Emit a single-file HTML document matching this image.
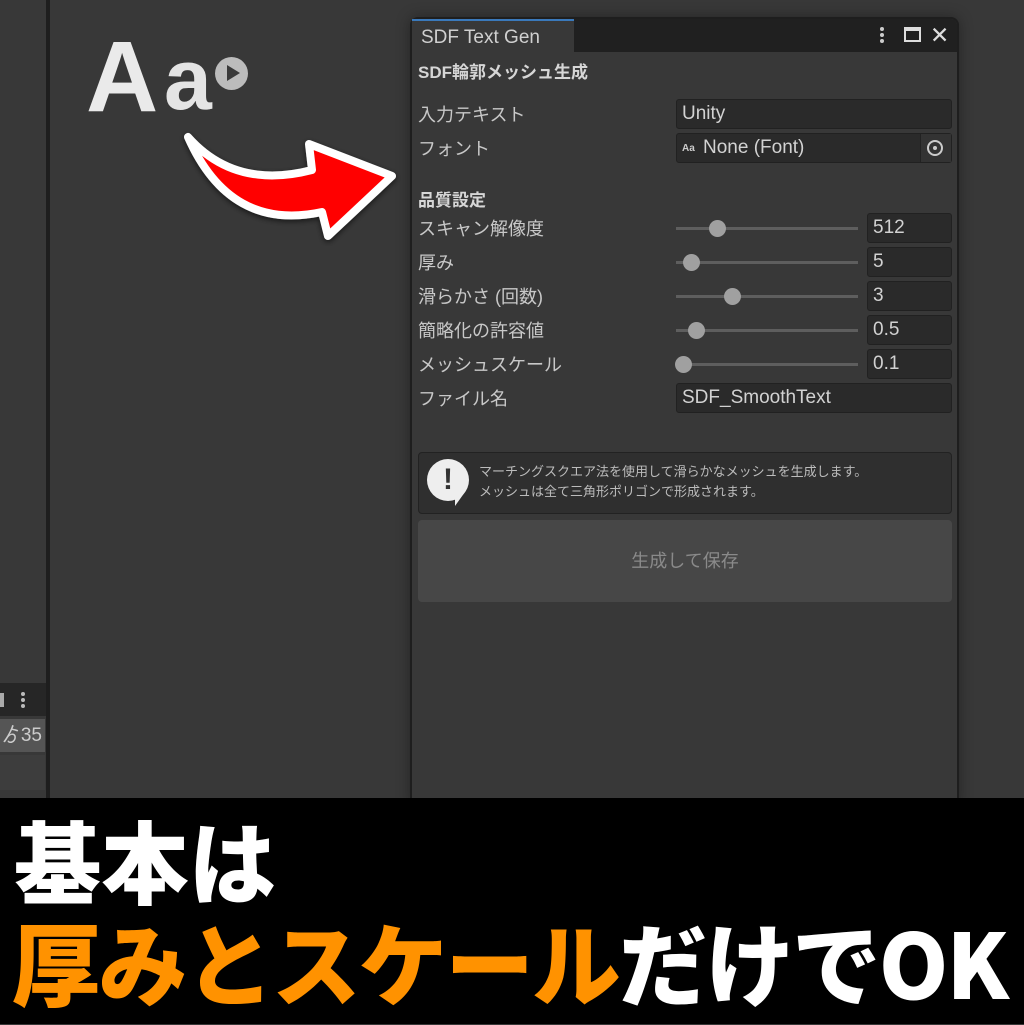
<!DOCTYPE html>
<html><head><meta charset="utf-8"><style>
*{margin:0;padding:0;box-sizing:border-box}
body{width:1024px;height:1024px;background:#383838;position:relative;overflow:hidden;font-family:"Liberation Sans","Noto Sans CJK JP",sans-serif;color:#c8c8c8}
.a{position:absolute}
.lbl{position:absolute;left:418px;font-size:18px;color:#c8c8c8;line-height:20px}
.fld{position:absolute;background:#2a2a2a;border:1px solid #212121;border-radius:3px;font-size:19px;color:#d2d2d2;padding-left:5px;line-height:28px;height:30px}
.trk{position:absolute;left:676px;width:182px;height:3px;background:#5e5e5e}
.knob{position:absolute;width:17px;height:17px;border-radius:50%;background:#a0a0a0}
</style></head><body>
<div class="a" style="left:0;top:0;width:46px;height:800px;background:#383838"></div>
<div class="a" style="left:46px;top:0;width:4px;height:800px;background:#1e1e1e"></div>
<div class="a" style="left:0;top:683px;width:46px;height:33px;background:#262626"></div>
<div class="a" style="left:21px;top:692px;width:4px;height:4px;border-radius:2px;background:#bbb;box-shadow:0 6px 0 #bbb,0 12px 0 #bbb"></div>
<div class="a" style="left:0;top:693px;width:4px;height:14px;background:#aaa"></div>
<div class="a" style="left:0;top:719px;width:45px;height:33px;background:#555;font-size:19px;color:#ccc;line-height:33px;text-align:right;padding-right:3px">ゟ35</div>
<div class="a" style="left:0;top:755px;width:45px;height:35px;background:#3d3d3d"></div>
<div class="a" style="left:86px;top:22px;font-size:100px;font-weight:bold;color:#eaeaea;font-family:'Liberation Sans',sans-serif;line-height:110px">A</div>
<div class="a" style="left:164px;top:30px;font-size:86px;font-weight:bold;color:#e4e4e4;font-family:'Liberation Sans',sans-serif;line-height:100px">a</div>
<div class="a" style="left:215px;top:57px;width:33px;height:33px;border-radius:50%;background:#bcbcbc"></div>
<div class="a" style="left:227px;top:65px;width:0;height:0;border-left:13px solid #3a3a3a;border-top:8px solid transparent;border-bottom:8px solid transparent"></div>
<svg class="a" style="left:0;top:0" width="420" height="260" viewBox="0 0 420 260">
<defs><filter id="s"><feDropShadow dx="0" dy="2" stdDeviation="3" flood-opacity="0.6"/></filter></defs>
<path d="M188 137 Q235 190 312 170 L309 144 L392 176 L328 236 L322 212 Q230 232 188 137 Z" fill="#ff0000" stroke="#fff" stroke-width="8" stroke-linejoin="round" filter="url(#s)"/>
</svg>
<div class="a" style="left:410px;top:17px;width:549px;height:790px;background:#383838;border:2px solid #1e1e1e;border-radius:8px;box-shadow:0 0 14px rgba(0,0,0,.35)"></div>
<div class="a" style="left:412px;top:19px;width:545px;height:33px;background:#202020;border-radius:6px 6px 0 0"></div>
<div class="a" style="left:412px;top:19px;width:162px;height:33px;background:#383838;border-top:2px solid #3a79bb;font-size:19px;color:#d0d0d0;padding-left:9px;line-height:34px">SDF Text Gen</div>
<div class="a" style="left:880px;top:27px;width:4px;height:4px;border-radius:2px;background:#ccc;box-shadow:0 6px 0 #ccc,0 12px 0 #ccc"></div>
<div class="a" style="left:904px;top:27px;width:17px;height:15px;border:2px solid #ddd;border-top-width:4px"></div>
<div class="a" style="left:930px;top:20px;font-size:23px;color:#ddd;line-height:30px">✕</div>
<div class="a" style="left:418px;top:58px;font-size:17px;font-weight:bold;color:#d6d6d6">SDF輪郭メッシュ生成</div>
<div class="lbl" style="top:105px">入力テキスト</div>
<div class="fld" style="left:676px;top:99px;width:276px">Unity</div>
<div class="lbl" style="top:139px">フォント</div>
<div class="fld" style="left:676px;top:133px;width:276px;padding-left:26px">None (Font)</div>
<div class="a" style="left:682px;top:143px;font-size:10px;font-weight:bold;color:#ccc">Aa</div>
<div class="a" style="left:920px;top:134px;width:31px;height:28px;background:#333;border-left:1px solid #222"></div>
<div class="a" style="left:927px;top:140px;width:16px;height:16px;border:2px solid #ccc;border-radius:50%"></div>
<div class="a" style="left:933px;top:146px;width:4px;height:4px;background:#ccc;border-radius:50%"></div>
<div class="a" style="left:418px;top:186px;font-size:17px;font-weight:bold;color:#d6d6d6">品質設定</div>
<div class="lbl" style="top:219px">スキャン解像度</div>
<div class="trk" style="top:227px"></div><div class="knob" style="left:709px;top:220px"></div>
<div class="fld" style="left:867px;top:213px;width:85px">512</div>
<div class="lbl" style="top:253px">厚み</div>
<div class="trk" style="top:261px"></div><div class="knob" style="left:683px;top:254px"></div>
<div class="fld" style="left:867px;top:247px;width:85px">5</div>
<div class="lbl" style="top:287px">滑らかさ (回数)</div>
<div class="trk" style="top:295px"></div><div class="knob" style="left:724px;top:288px"></div>
<div class="fld" style="left:867px;top:281px;width:85px">3</div>
<div class="lbl" style="top:321px">簡略化の許容値</div>
<div class="trk" style="top:329px"></div><div class="knob" style="left:688px;top:322px"></div>
<div class="fld" style="left:867px;top:315px;width:85px">0.5</div>
<div class="lbl" style="top:355px">メッシュスケール</div>
<div class="trk" style="top:363px"></div><div class="knob" style="left:675px;top:356px"></div>
<div class="fld" style="left:867px;top:349px;width:85px">0.1</div>
<div class="lbl" style="top:389px">ファイル名</div>
<div class="fld" style="left:676px;top:383px;width:276px">SDF_SmoothText</div>
<div class="a" style="left:418px;top:452px;width:534px;height:62px;background:#2f2f2f;border:1px solid #222;border-radius:4px"></div>
<div class="a" style="left:427px;top:459px;width:42px;height:42px;border-radius:50%;background:#eee;font-size:30px;font-weight:bold;color:#333;text-align:center;line-height:42px">!</div>
<div class="a" style="left:455px;top:492px;width:0;height:0;border-top:14px solid #eee;border-right:10px solid transparent"></div>
<div class="a" style="left:479px;top:462px;font-size:13px;color:#bcbcbc;line-height:20px">マーチングスクエア法を使用して滑らかなメッシュを生成します。<br>メッシュは全て三角形ポリゴンで形成されます。</div>
<div class="a" style="left:418px;top:520px;width:534px;height:82px;background:#474747;border-radius:4px;font-size:18px;color:#8a8a8a;text-align:center;line-height:82px">生成して保存</div>
<div class="a" style="left:0;top:798px;width:1024px;height:226px;background:#000"></div>
<div class="a" style="left:14px;top:806px;font-size:90px;font-weight:900;color:#fff;line-height:104px;font-family:'Noto Sans CJK JP',sans-serif;transform:scaleX(0.97);transform-origin:0 0">基本は</div>
<div class="a" style="left:12px;top:908px;font-size:90px;font-weight:900;line-height:104px;font-family:'Noto Sans CJK JP',sans-serif;letter-spacing:-2px;white-space:nowrap;transform:scaleX(0.985);transform-origin:0 0"><span style="color:#ff9200">厚みとスケール</span><span style="color:#fff">だけでOK</span></div>
</body></html>
